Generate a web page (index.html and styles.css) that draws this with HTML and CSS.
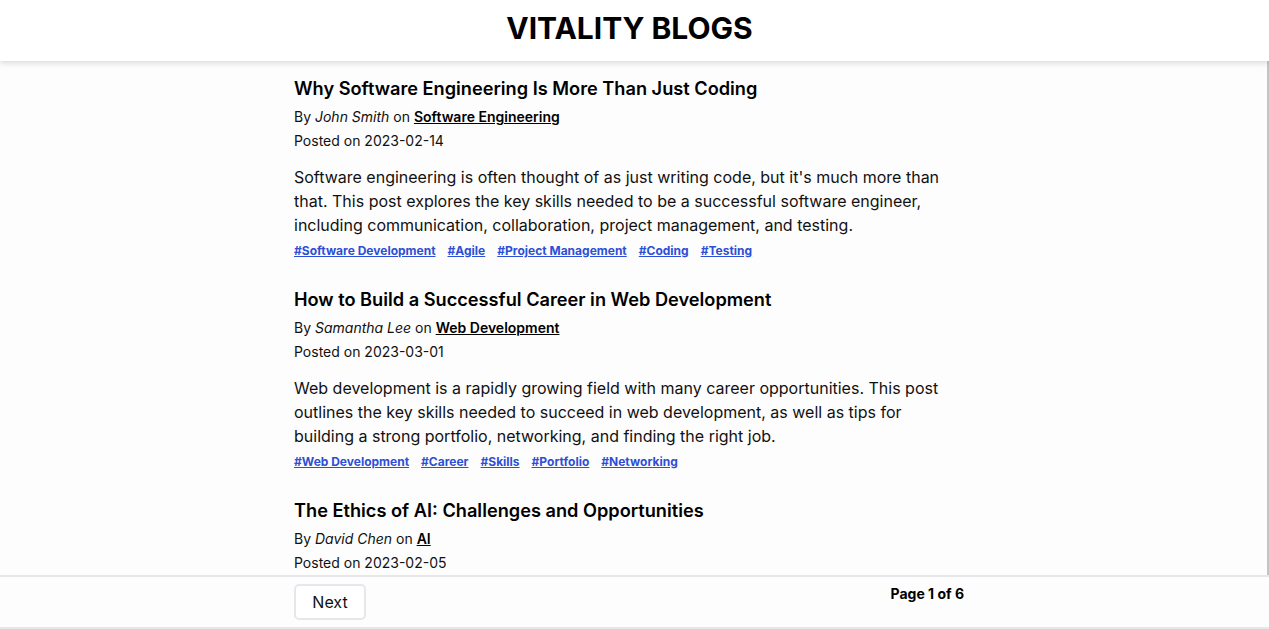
FILE: index.html
```html
<!DOCTYPE html>
<html>
<head>
<meta charset="utf-8">
<link rel="stylesheet" href="styles.css">
</head>
<body>
<header class="site-header"><h1 class="site-title">VITALITY BLOGS</h1></header>
<main class="feed">
  <div class="container">
    <article class="post">
      <h2 class="post-title">Why Software Engineering Is More Than Just Coding</h2>
      <p class="meta">By <em>John Smith</em> on <a class="cat" href="#">Software Engineering</a></p>
      <p class="meta">Posted on 2023-02-14</p>
      <p class="excerpt">Software engineering is often thought of as just writing code, but it's much more than that. This post explores the key skills needed to be a successful software engineer, including communication, collaboration, project management, and testing.</p>
      <div class="tags"><a href="#">#Software Development</a><a href="#">#Agile</a><a href="#">#Project Management</a><a href="#">#Coding</a><a href="#">#Testing</a></div>
    </article>
    <article class="post">
      <h2 class="post-title">How to Build a Successful Career in Web Development</h2>
      <p class="meta">By <em>Samantha Lee</em> on <a class="cat" href="#">Web Development</a></p>
      <p class="meta">Posted on 2023-03-01</p>
      <p class="excerpt">Web development is a rapidly growing field with many career opportunities. This post outlines the key skills needed to succeed in web development, as well as tips for building a strong portfolio, networking, and finding the right job.</p>
      <div class="tags"><a href="#">#Web Development</a><a href="#">#Career</a><a href="#">#Skills</a><a href="#">#Portfolio</a><a href="#">#Networking</a></div>
    </article>
    <article class="post">
      <h2 class="post-title">The Ethics of AI: Challenges and Opportunities</h2>
      <p class="meta">By <em>David Chen</em> on <a class="cat" href="#">AI</a></p>
      <p class="meta">Posted on 2023-02-05</p>
    </article>
  </div>
</main>
<footer class="pager">
  <div class="container pager-row">
    <button class="btn">Next</button>
    <span class="page-count">Page 1 of 6</span>
  </div>
</footer>
</body>
</html>
```

FILE: styles.css
```css
* { box-sizing: border-box; }
html, body { margin: 0; padding: 0; }
body {
  font-family: Inter, "Noto Sans", sans-serif;
  color: #111;
  background: #fff;
  height: 629px;
  display: flex;
  flex-direction: column;
  overflow: hidden;
}
.site-header {
  height: 61px;
  background: #fff;
  display: flex;
  justify-content: center;
  align-items: center;
  padding-right: 10px;
  box-shadow: 0 2px 6px rgba(0,0,0,0.15);
  position: relative;
  z-index: 2;
  flex: none;
}
.site-title {
  margin: 0;
  font-size: 30px;
  font-weight: 700;
  color: #000;
  padding-bottom: 6px;
}
.feed {
  flex: 1;
  overflow: hidden;
  background: #fdfdfd;
  border-right: 2px solid #c4c4c4;
  padding-top: 13px;
}
.container {
  width: 670px;
  margin-left: 294px;
}
.post { margin-bottom: 22px; }
.post-title {
  margin: 0 0 3px;
  font-size: 18.2px;
  font-weight: 600;
  line-height: 28px;
  color: #000;
}
.meta {
  margin: 0;
  font-size: 14px;
  line-height: 24px;
  color: #111;
}
.meta em { font-style: italic; }
.cat { color: #000; font-weight: 600; text-decoration: underline; }
.excerpt {
  margin: 12px 0 0;
  font-size: 16px;
  line-height: 24px;
  color: #111;
}
.tags {
  display: flex;
  gap: 12px;
  margin-top: 2px;
  line-height: 24px;
}
.tags a {
  font-size: 12px;
  font-weight: 700;
  color: #2d4fd6;
  text-decoration: underline;
}
.pager {
  flex: none;
  height: 54px;
  border-top: 2px solid #e5e7eb;
  border-bottom: 2px solid #e5e7eb;
  background: #fdfdfd;
}
.pager-row {
  display: flex;
  justify-content: space-between;
  align-items: flex-start;
  padding-top: 7px;
}
.btn {
  font-family: Inter, sans-serif;
  font-size: 16px;
  color: #111;
  background: #fff;
  border: 2px solid #e5e7eb;
  border-radius: 5px;
  width: 72px;
  height: 36px;
  padding: 0;
}
.page-count {
  font-size: 14px;
  font-weight: 700;
  color: #000;
  margin-top: 1px;
}
```
